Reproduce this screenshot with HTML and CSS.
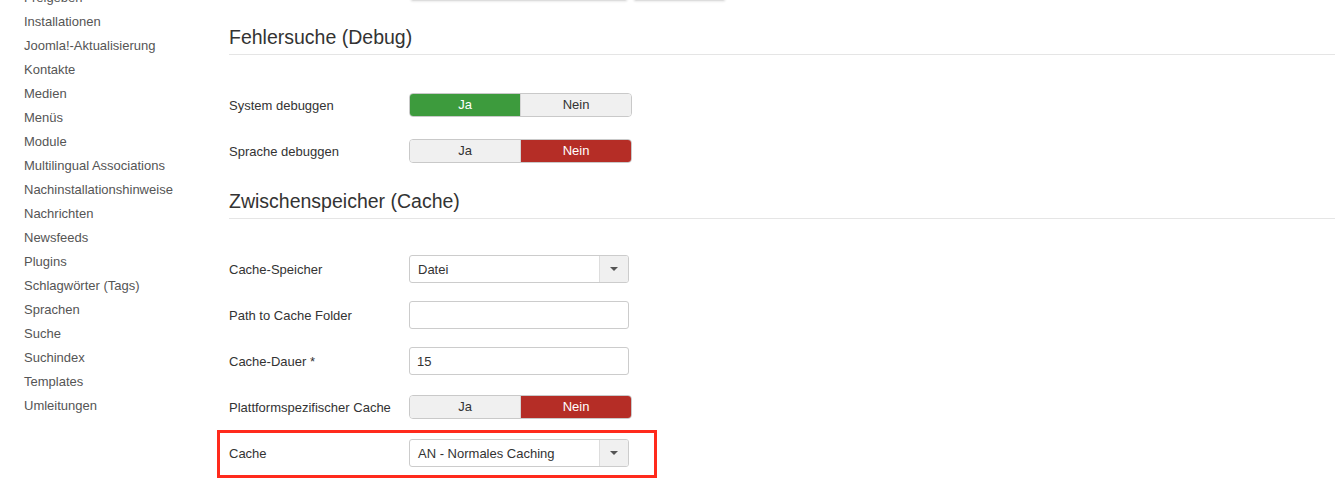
FILE: index.html
```html
<!DOCTYPE html>
<html lang="de">
<head>
<meta charset="utf-8">
<title>Globale Konfiguration</title>
<link rel="stylesheet" href="styles.css">
</head>
<body>
<div class="page">
  <nav class="sidebar">
    <ul class="menu">
      <li>Freigeben</li>
      <li>Installationen</li>
      <li>Joomla!-Aktualisierung</li>
      <li>Kontakte</li>
      <li>Medien</li>
      <li>Menüs</li>
      <li>Module</li>
      <li>Multilingual Associations</li>
      <li>Nachinstallationshinweise</li>
      <li>Nachrichten</li>
      <li>Newsfeeds</li>
      <li>Plugins</li>
      <li>Schlagwörter (Tags)</li>
      <li>Sprachen</li>
      <li>Suche</li>
      <li>Suchindex</li>
      <li>Templates</li>
      <li>Umleitungen</li>
    </ul>
  </nav>
  <main class="content">
    <div class="prev-row">
      <div class="prev-input"></div>
      <div class="prev-btn"></div>
    </div>

    <h2 class="legend legend-first">Fehlersuche (Debug)</h2>
    <div class="row row-toggle-first">
      <label class="label">System debuggen</label>
      <div class="toggle">
        <span class="opt on-green">Ja</span>
        <span class="opt">Nein</span>
      </div>
    </div>
    <div class="row row-toggle">
      <label class="label">Sprache debuggen</label>
      <div class="toggle">
        <span class="opt">Ja</span>
        <span class="opt on-red">Nein</span>
      </div>
    </div>

    <h2 class="legend legend-second">Zwischenspeicher (Cache)</h2>
    <div class="row row-first-field">
      <label class="label">Cache-Speicher</label>
      <div class="select">
        <span class="select-value">Datei</span>
        <span class="select-arrow"><span class="caret"></span></span>
      </div>
    </div>
    <div class="row row-field">
      <label class="label">Path to Cache Folder</label>
      <div class="input"></div>
    </div>
    <div class="row row-field">
      <label class="label">Cache-Dauer *</label>
      <div class="input">15</div>
    </div>
    <div class="row row-toggle-after">
      <label class="label">Plattformspezifischer Cache</label>
      <div class="toggle">
        <span class="opt">Ja</span>
        <span class="opt on-red">Nein</span>
      </div>
    </div>
    <div class="highlight">
      <div class="row">
        <label class="label">Cache</label>
        <div class="select">
          <span class="select-value">AN - Normales Caching</span>
          <span class="select-arrow"><span class="caret"></span></span>
        </div>
      </div>
    </div>
  </main>
</div>
</body>
</html>
```

FILE: styles.css
```css
* { box-sizing: border-box; }

html, body {
  margin: 0;
  padding: 0;
  background: #ffffff;
  overflow: hidden;
}

body {
  font-family: "Liberation Sans", Arial, Helvetica, sans-serif;
  font-size: 13px;
  color: #333333;
  width: 1335px;
  height: 483px;
}

.page {
  display: flex;
  align-items: flex-start;
}

.sidebar {
  width: 229px;
  flex: none;
  padding-left: 24px;
}

.menu {
  list-style: none;
  margin: -14px 0 0 0;
  padding: 0;
}

.menu li {
  line-height: 24px;
  color: #555555;
  white-space: nowrap;
}

.content {
  flex: 1;
  min-width: 0;
}

.prev-row {
  display: flex;
  gap: 5px;
  margin-top: -27px;
  padding-left: 181px;
  height: 28px;
}

.prev-input,
.prev-btn {
  height: 28px;
  border: 1px solid #dddddd;
  border-radius: 3px;
  box-shadow: 0 1px 2px rgba(0, 0, 0, 0.08);
}

.prev-input { width: 218px; }
.prev-btn { width: 93px; }

.legend {
  margin: 0;
  font-weight: normal;
  font-size: 19.5px;
  line-height: 24px;
  color: #333333;
  padding-bottom: 5px;
  border-bottom: 1px solid #e5e5e5;
}

.legend-first { margin-top: 24px; }
.legend-second { margin-top: 26px; }

.row {
  display: flex;
  align-items: center;
}

.row-toggle-first { margin-top: 38px; }
.row-toggle { margin-top: 22px; }
.row-first-field { margin-top: 36px; }
.row-field { margin-top: 18px; }
.row-toggle-after { margin-top: 20px; }

.label {
  width: 180px;
  flex: none;
  white-space: nowrap;
  color: #333333;
}

.toggle {
  display: flex;
  width: 223px;
  height: 24px;
  border: 1px solid #c9c9c9;
  border-radius: 4px;
  overflow: hidden;
}

.opt {
  flex: 1;
  display: flex;
  align-items: center;
  justify-content: center;
  padding-bottom: 1px;
  background: #f0f0f0;
  color: #333333;
}

.opt + .opt { border-left: 1px solid #d4d4d4; }

.opt.on-green {
  background: #3d9b3d;
  color: #ffffff;
}

.opt.on-red {
  background: #b52d26;
  color: #ffffff;
}

.select {
  display: flex;
  width: 220px;
  height: 28px;
  border: 1px solid #cccccc;
  border-radius: 3px;
  overflow: hidden;
  background: #ffffff;
}

.select-value {
  flex: 1;
  display: flex;
  align-items: center;
  padding-left: 8px;
  color: #333333;
}

.select-arrow {
  width: 29px;
  flex: none;
  background: #f0f0f0;
  border-left: 1px solid #dddddd;
  display: flex;
  align-items: center;
  justify-content: center;
}

.caret {
  width: 0;
  height: 0;
  border-left: 4px solid transparent;
  border-right: 4px solid transparent;
  border-top: 4px solid #555555;
}

.input {
  width: 220px;
  height: 28px;
  border: 1px solid #cccccc;
  border-radius: 3px;
  padding-left: 7px;
  display: flex;
  align-items: center;
  color: #333333;
}

.highlight {
  margin-top: 11px;
  margin-left: -12px;
  width: 440px;
  border: 3px solid #ff2a1c;
  padding: 6px 0 8px 9px;
}
```
